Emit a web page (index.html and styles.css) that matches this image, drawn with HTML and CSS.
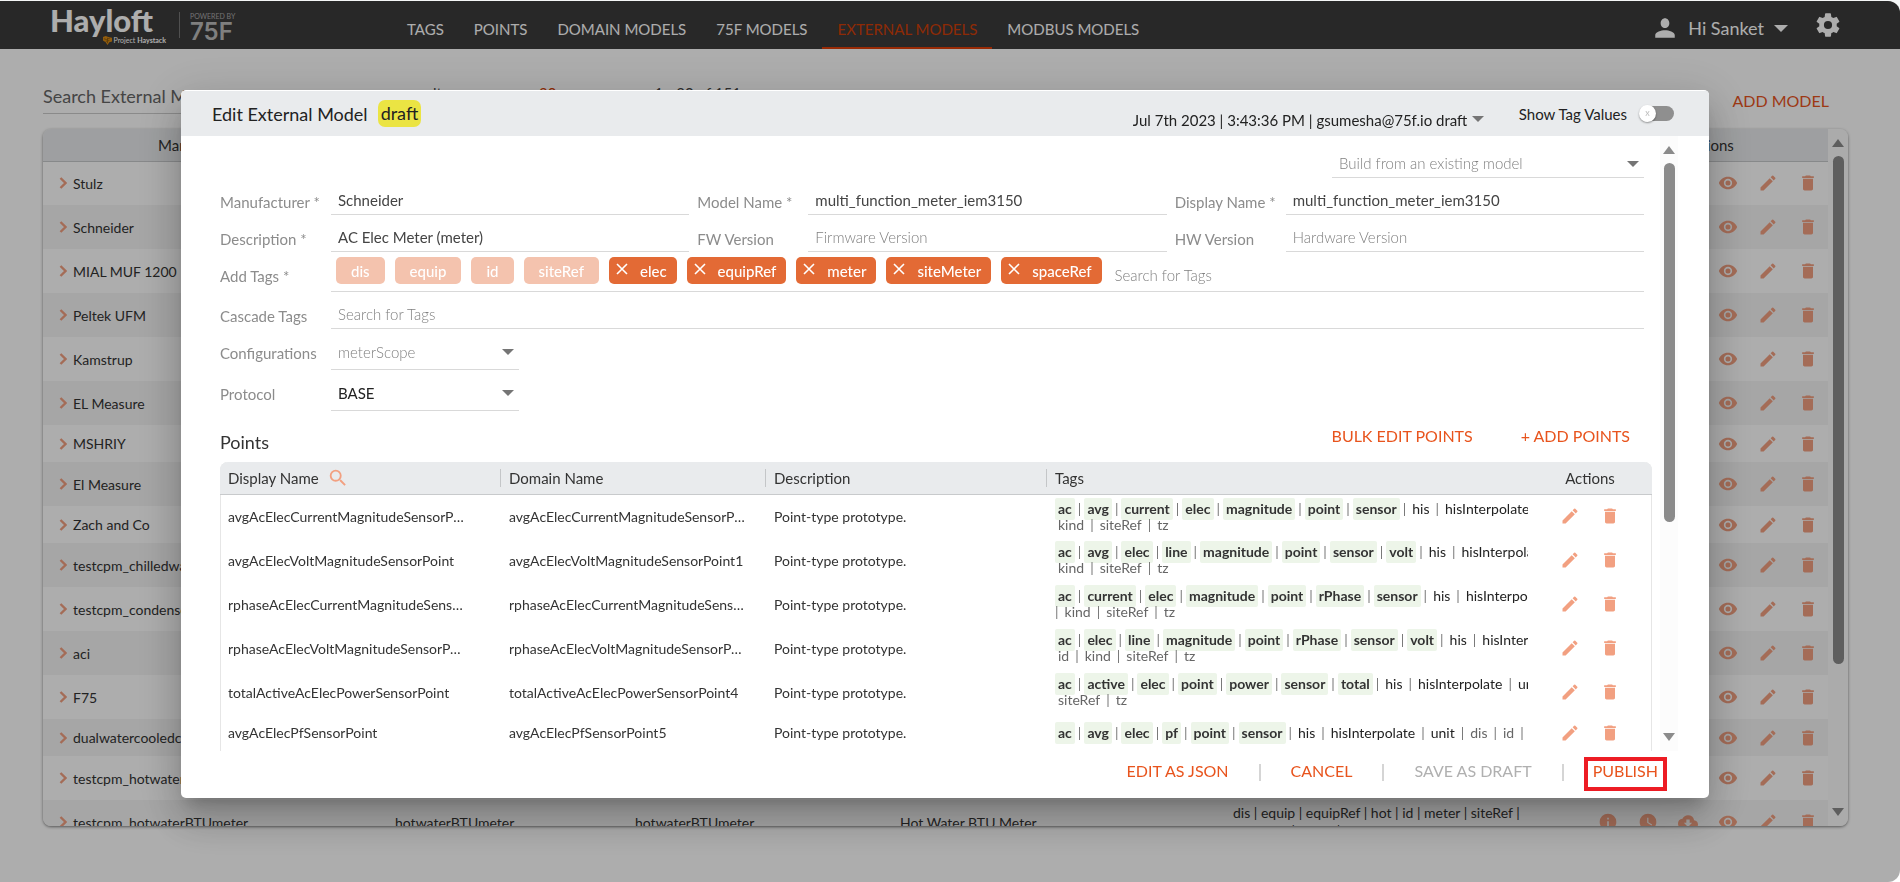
FILE: index.html
```html
<!DOCTYPE html>
<html lang="en">
<head>
    <meta charset="UTF-8">
    <meta name="viewport" content="width=device-width, initial-scale=1.0">
    <title>Hayloft - External Models</title>
    <link rel="stylesheet" href="styles.css">
</head>
<body>
    <svg class="sprite" aria-hidden="true">
        <symbol id="icon-edit" viewBox="0 0 24 24"><path d="M3 17.25V21h3.75L17.81 9.94l-3.75-3.75L3 17.25zM20.71 7.04a1 1 0 0 0 0-1.41l-2.34-2.34a1 1 0 0 0-1.41 0l-1.83 1.83 3.75 3.75 1.83-1.83z"/></symbol>
        <symbol id="icon-delete" viewBox="0 0 24 24"><path d="M6 19c0 1.1.9 2 2 2h8c1.1 0 2-.9 2-2V7H6v12zM19 4h-3.500l-1-1h-5l-1 1H5v2h14V4z"/></symbol>
        <symbol id="icon-view" viewBox="0 0 24 24"><path d="M12 4.500C7 4.500 2.730 7.610 1 12c1.730 4.390 6 7.500 11 7.500s9.270-3.110 11-7.500c-1.730-4.390-6-7.500-11-7.500zM12 17c-2.760 0-5-2.240-5-5s2.240-5 5-5 5 2.240 5 5-2.240 5-5 5zm0-8a3 3 0 1 0 0 6 3 3 0 0 0 0-6z"/></symbol>
        <symbol id="icon-info" viewBox="0 0 24 24"><path d="M12 2a10 10 0 1 0 0 20 10 10 0 0 0 0-20zm1 15h-2v-6h2v6zm0-8h-2V7h2v2z"/></symbol>
        <symbol id="icon-history" viewBox="0 0 24 24"><path d="M12 2a10 10 0 1 0 0 20 10 10 0 0 0 0-20zm4.200 14.200L11 13V7h1.500v5.200l4.500 2.700-.8 1.300z"/></symbol>
        <symbol id="icon-download" viewBox="0 0 24 24"><path d="M19.350 10.040A7.490 7.490 0 0 0 12 4C9.110 4 6.600 5.640 5.350 8.040A5.994 5.994 0 0 0 0 14c0 3.310 2.690 6 6 6h13c2.760 0 5-2.240 5-5 0-2.640-2.050-4.780-4.650-4.960zM17 13l-5 5-5-5h3V9h4v4h3z"/></symbol>
        <symbol id="icon-chevron" viewBox="0 0 8 12"><path d="M1.500 1l5 5-5 5" fill="none" stroke="currentColor" stroke-width="2.400"/></symbol>
        <symbol id="icon-close" viewBox="0 0 12 12"><path d="M1 1l10 10M11 1L1 11" fill="none" stroke="currentColor" stroke-width="1.600"/></symbol>
        <symbol id="icon-search" viewBox="0 0 24 24"><path d="M15.500 14h-.79l-.28-.27A6.470 6.470 0 0 0 16 9.500 6.500 6.500 0 1 0 9.500 16c1.610 0 3.090-.59 4.230-1.570l.27.28v.79l5 4.990L20.490 19l-4.990-5zm-6 0a4.500 4.500 0 1 1 0-9 4.500 4.500 0 0 1 0 9z"/></symbol>
        <symbol id="icon-person" viewBox="0 0 24 24"><path d="M12 12c2.210 0 4-2 4-4.500S14.210 3 12 3 8 5 8 7.500s1.790 4.500 4 4.500zm0 2c-3.500 0-9 1.500-9 4.500V21h18v-2.500c0-3-5.500-4.500-9-4.500z"/></symbol>
        <symbol id="icon-settings" viewBox="0 0 24 24"><path d="M19.430 12.980c.04-.32.07-.64.07-.98s-.03-.66-.07-.98l2.110-1.650a.5.5 0 0 0 .12-.64l-2-3.460a.5.5 0 0 0-.61-.22l-2.490 1a7.300 7.300 0 0 0-1.690-.98l-.38-2.650A.49.49 0 0 0 14 2h-4a.49.49 0 0 0-.49.42l-.38 2.650c-.61.25-1.170.59-1.690.98l-2.490-1a.5.5 0 0 0-.61.22l-2 3.460a.5.5 0 0 0 .12.64l2.110 1.650c-.04.32-.07.65-.07.98s.03.66.07.98l-2.110 1.650a.5.5 0 0 0-.12.64l2 3.460a.5.5 0 0 0 .61.22l2.490-1c.52.4 1.080.73 1.690.98l.38 2.650c.03.24.24.42.49.42h4c.25 0 .46-.18.49-.42l.38-2.650c.61-.25 1.170-.59 1.690-.98l2.490 1a.5.5 0 0 0 .61-.22l2-3.460a.5.5 0 0 0-.12-.64l-2.110-1.650zM12 15.500a3.500 3.500 0 1 1 0-7 3.500 3.500 0 0 1 0 7z"/></symbol>
    </svg>

    <div class="page">
        <header class="topbar">
            <a class="logo" href="#">
                <span class="logo-name">Hayloft</span>
                <span class="logo-sub">
                    <svg viewBox="0 0 10 10"><path d="M0 1l3-1 3 1 4 1v4l-3 1-2 3-2-3-3-2z" fill="#d98a14"/><path d="M1 3l3 1 4-2M3 6l4-1M5 2v6" fill="none" stroke="#8a5a10"/></svg>
                    Project <b>Haystack</b>
                </span>
            </a>
            <div class="powered">
                <span class="powered-by">POWERED BY</span>
                <span class="powered-name">75F</span>
            </div>
            <nav class="nav">
                <a href="#">TAGS</a>
                <a href="#">POINTS</a>
                <a href="#">DOMAIN MODELS</a>
                <a href="#">75F MODELS</a>
                <a href="#" class="active">EXTERNAL MODELS</a>
                <a href="#">MODBUS MODELS</a>
            </nav>
            <button class="user-button">
                <svg class="icon-user"><use href="#icon-person"/></svg>
                Hi Sanket
                <span class="arrow-down"></span>
            </button>
            <button class="settings-button" aria-label="Settings">
                <svg><use href="#icon-settings"/></svg>
            </button>
        </header>

        <main class="content">
            <div class="toolbar">
                <input class="search-input" type="text" placeholder="Search External Model" aria-label="Search External Model">
                <div class="pager">
                    <span>results per page</span>
                    <span class="pager-size">20</span>
                    <span>1 - 20 of 151</span>
                </div>
                <button class="link-button">ADD MODEL</button>
            </div>
            <div class="models-card">
                <div class="models-scroll">
                    <table class="models-table">
                        <thead>
                            <tr>
                                <th class="col-manufacturer">Manufacturer</th>
                                <th class="col-model">Model Name</th>
                                <th class="col-display">Display Name</th>
                                <th>Description</th>
                                <th class="col-tags">Tags</th>
                                <th class="col-actions">Actions</th>
                            </tr>
                        </thead>
                        <tbody id="modelRows"></tbody>
                    </table>
                </div>
                <div class="scrollbar">
                    <span class="scroll-up"></span>
                    <div class="scroll-track"><div class="scroll-thumb" style="height: 79%"></div></div>
                    <span class="scroll-down"></span>
                </div>
            </div>
        </main>
    </div>

    <div class="backdrop"></div>

    <div class="modal" role="dialog" aria-labelledby="modalTitle">
        <div class="modal-header">
            <h1 id="modalTitle">Edit External Model</h1>
            <span class="badge">draft</span>
            <div class="select-box version-box">
                <select aria-label="Version">
                    <option>Jul 7th 2023 | 3:43:36 PM | gsumesha@75f.io draft</option>
                </select>
            </div>
            <label class="toggle-label" for="showTagValues">Show Tag Values</label>
            <input class="toggle" type="checkbox" id="showTagValues">
        </div>

        <div class="modal-body">
            <div class="modal-scroll">
                <div class="form">
                    <div class="select-box build-box">
                        <select class="muted" aria-label="Build from an existing model">
                            <option>Build from an existing model</option>
                        </select>
                    </div>

                    <div class="form-grid">
                        <div class="field">
                            <label for="manufacturer">Manufacturer *</label>
                            <input type="text" id="manufacturer" value="Schneider">
                        </div>
                        <div class="field">
                            <label for="modelName">Model Name *</label>
                            <input type="text" id="modelName" value="multi_function_meter_iem3150">
                        </div>
                        <div class="field">
                            <label for="displayName">Display Name *</label>
                            <input type="text" id="displayName" value="multi_function_meter_iem3150">
                        </div>
                        <div class="field">
                            <label for="description">Description *</label>
                            <input type="text" id="description" value="AC Elec Meter (meter)">
                        </div>
                        <div class="field">
                            <label for="fwVersion">FW Version</label>
                            <input type="text" id="fwVersion" placeholder="Firmware Version">
                        </div>
                        <div class="field">
                            <label for="hwVersion">HW Version</label>
                            <input type="text" id="hwVersion" placeholder="Hardware Version">
                        </div>
                    </div>

                    <div class="field field-tags">
                        <label for="addTags">Add Tags *</label>
                        <div class="chips">
                            <span class="chip chip-fixed">dis</span>
                            <span class="chip chip-fixed">equip</span>
                            <span class="chip chip-fixed">id</span>
                            <span class="chip chip-fixed">siteRef</span>
                            <span class="chip"><button aria-label="Remove elec"><svg><use href="#icon-close"/></svg></button>elec</span>
                            <span class="chip"><button aria-label="Remove equipRef"><svg><use href="#icon-close"/></svg></button>equipRef</span>
                            <span class="chip"><button aria-label="Remove meter"><svg><use href="#icon-close"/></svg></button>meter</span>
                            <span class="chip"><button aria-label="Remove siteMeter"><svg><use href="#icon-close"/></svg></button>siteMeter</span>
                            <span class="chip"><button aria-label="Remove spaceRef"><svg><use href="#icon-close"/></svg></button>spaceRef</span>
                            <input type="text" id="addTags" placeholder="Search for Tags">
                        </div>
                    </div>
                    <div class="field">
                        <label for="cascadeTags">Cascade Tags</label>
                        <input type="text" id="cascadeTags" placeholder="Search for Tags">
                    </div>
                    <div class="field field-select">
                        <label for="configurations">Configurations</label>
                        <div class="select-box">
                            <select class="muted" id="configurations"><option>meterScope</option></select>
                        </div>
                    </div>
                    <div class="field field-select">
                        <label for="protocol">Protocol</label>
                        <div class="select-box">
                            <select id="protocol"><option>BASE</option></select>
                        </div>
                    </div>
                </div>

                <div class="points-bar">
                    <h2>Points</h2>
                    <button class="link-button">BULK EDIT POINTS</button>
                    <button class="link-button">+ ADD POINTS</button>
                </div>

                <div class="points-card">
                    <table class="points-table">
                        <thead>
                            <tr>
                                <th class="col-name"><span class="th-name">Display Name <svg><use href="#icon-search"/></svg></span></th>
                                <th class="col-domain">Domain Name</th>
                                <th class="col-description">Description</th>
                                <th>Tags</th>
                                <th class="col-edit">Actions</th>
                            </tr>
                        </thead>
                        <tbody id="pointRows"></tbody>
                    </table>
                </div>
            </div>
            <div class="scrollbar modal-scrollbar">
                <span class="scroll-up"></span>
                <div class="scroll-track"><div class="scroll-thumb" style="height: 64%"></div></div>
                <span class="scroll-down"></span>
            </div>
        </div>

        <div class="modal-footer">
            <button class="link-button">EDIT AS JSON</button>
            <button class="link-button">CANCEL</button>
            <button class="link-button" disabled>SAVE AS DRAFT</button>
            <button class="link-button publish">PUBLISH</button>
        </div>
    </div>

    <script>
        const models = [
            { name: 'Stulz' },
            { name: 'Schneider' },
            { name: 'MIAL MUF 1200' },
            { name: 'Peltek UFM' },
            { name: 'Kamstrup' },
            { name: 'EL Measure' },
            { name: 'MSHRIY', short: true },
            { name: 'El Measure' },
            { name: 'Zach and Co', short: true },
            { name: 'testcpm_chilledwater' },
            { name: 'testcpm_condenser' },
            { name: 'aci' },
            { name: 'F75' },
            { name: 'dualwatercooledchiller', short: true },
            { name: 'testcpm_hotwater' },
            {
                name: 'testcpm_hotwaterBTUmeter',
                model: 'hotwaterBTUmeter',
                display: 'hotwaterBTUmeter',
                description: 'Hot Water BTU Meter',
                tags: 'dis | equip | equipRef | hot | id | meter | siteRef | spaceRef | water | btu'
            }
        ];

        // main: highlighted tags, more: normal tags, extra: grey tags, rest: second line
        const points = [
            { name: 'avgAcElecCurrentMagnitudeSensorPoint', domain: 'avgAcElecCurrentMagnitudeSensorPoint0', main: 'ac avg current elec magnitude point sensor', more: 'his hisInterpolate', rest: 'kind siteRef tz' },
            { name: 'avgAcElecVoltMagnitudeSensorPoint', domain: 'avgAcElecVoltMagnitudeSensorPoint1', main: 'ac avg elec line magnitude point sensor volt', more: 'his hisInterpolate', rest: 'kind siteRef tz' },
            { name: 'rphaseAcElecCurrentMagnitudeSensorPoint', domain: 'rphaseAcElecCurrentMagnitudeSensorPoint2', main: 'ac current elec magnitude point rPhase sensor', more: 'his hisInterpolate', rest: 'kind siteRef tz', leadingBar: true },
            { name: 'rphaseAcElecVoltMagnitudeSensorPoint', domain: 'rphaseAcElecVoltMagnitudeSensorPoint3', main: 'ac elec line magnitude point rPhase sensor volt', more: 'his hisInterpolate', rest: 'id kind siteRef tz' },
            { name: 'totalActiveAcElecPowerSensorPoint', domain: 'totalActiveAcElecPowerSensorPoint4', main: 'ac active elec point power sensor total', more: 'his hisInterpolate unit', rest: 'siteRef tz' },
            { name: 'avgAcElecPfSensorPoint', domain: 'avgAcElecPfSensorPoint5', main: 'ac avg elec pf point sensor', more: 'his hisInterpolate unit', extra: 'dis id kind' }
        ];

        const bar = '<i>|</i>';

        function icon(name, label) {
            return `<button class="icon-button" aria-label="${label}"><svg><use href="#icon-${name}"/></svg></button>`;
        }

        function tagList(tags, className) {
            return tags ? tags.split(' ').map(tag => `<span class="${className}">${tag}</span>`) : [];
        }

        document.getElementById('modelRows').innerHTML = models.map(model => `
            <tr class="${model.short ? 'short' : ''}">
                <td><span class="model-name"><svg><use href="#icon-chevron"/></svg>${model.name}</span></td>
                <td>${model.model || ''}</td>
                <td>${model.display || ''}</td>
                <td>${model.description || ''}</td>
                <td><div class="model-tags">${model.tags || ''}</div></td>
                <td><div class="actions">
                    ${icon('info', 'Info')}${icon('history', 'History')}${icon('download', 'Download')}
                    ${icon('view', 'View')}${icon('edit', 'Edit')}${icon('delete', 'Delete')}
                </div></td>
            </tr>`).join('');

        document.getElementById('pointRows').innerHTML = points.map(point => {
            const tags = tagList(point.main, 'tag tag-main')
                .concat(tagList(point.more, 'tag'), tagList(point.extra, 'tag tag-extra'));
            const rest = (point.leadingBar ? bar : '') + tagList(point.rest, 'tag tag-extra').join(bar);
            return `
            <tr class="${point.rest ? '' : 'short'}">
                <td><div class="ellipsis">${point.name}</div></td>
                <td><div class="ellipsis">${point.domain}</div></td>
                <td>Point-type prototype.</td>
                <td>
                    <div class="tag-line">${tags.join(bar)}</div>
                    ${rest ? `<div class="tag-line tag-rest">${rest}</div>` : ''}
                </td>
                <td><div class="actions">${icon('edit', 'Edit')}${icon('delete', 'Delete')}</div></td>
            </tr>`;
        }).join('');
    </script>
</body>
</html>
```
FILE: styles.css
```css
* {
    margin: 0;
    padding: 0;
    box-sizing: border-box;
}

body {
    background: #f4f6f6;
    color: #333;
    font-family: Lato, "Open Sans", sans-serif;
    font-size: 15px;
    height: 100vh;
    overflow: hidden;
}

button, input, select {
    font: inherit;
    color: inherit;
    background: none;
    border: none;
    outline: none;
    min-width: 0;
}

button {
    cursor: pointer;
}

.sprite {
    position: absolute;
    width: 0;
    height: 0;
}

svg {
    display: block;
    fill: currentColor;
}

.page {
    display: flex;
    flex-direction: column;
    height: 100vh;
    padding-top: 1px;
}

/* top bar */
.topbar {
    display: flex;
    align-items: center;
    height: 48px;
    padding: 0 58px 0 50px;
    background: #3c3c3c;
    color: #fff;
    border-radius: 0 12px 0 0;
}

.logo {
    display: flex;
    flex-direction: column;
    width: 129px;
    height: 40px;
    color: #fff;
    text-decoration: none;
}

.logo-name {
    font-size: 31px;
    font-weight: 900;
    line-height: 31px;
}

.logo-sub {
    display: flex;
    align-items: center;
    justify-content: flex-end;
    gap: 2px;
    padding-right: 13px;
    font-size: 7px;
    line-height: 9px;
}

.logo-sub svg {
    width: 9px;
    height: 9px;
}

.powered {
    display: flex;
    flex-direction: column;
    gap: 1px;
    width: 213px;
    padding-left: 10px;
    border-left: 1px solid #777;
    color: #aaa;
}

.powered-by {
    font-size: 7px;
    line-height: 9px;
}

.powered-name {
    font-family: Inter, sans-serif;
    font-size: 24px;
    font-weight: 600;
    line-height: 28px;
    height: 20px;
    margin-top: -4px;
    color: #bbb;
}

.nav {
    display: flex;
    flex: 1;
    height: 48px;
}

.nav a {
    padding: 18px 15px 0;
    line-height: 20px;
    color: #fff;
    text-decoration: none;
}

.nav .active {
    color: #d23f08;
    border-bottom: 2px solid #e03f08;
}

.user-button {
    display: flex;
    align-items: center;
    gap: 10px;
    margin-right: 26px;
    padding-top: 6px;
    font-size: 18px;
}

.icon-user {
    width: 26px;
    height: 26px;
}

.arrow-down {
    border: 7px solid transparent;
    border-top-color: currentColor;
    border-bottom: 0;
}

.settings-button {
    height: 28px;
}

.settings-button svg {
    width: 28px;
    height: 28px;
}

/* models page */
.content {
    display: flex;
    flex-direction: column;
    flex: 1;
    min-height: 0;
    padding: 31px 52px 56px 43px;
    background: #fff;
}

.toolbar {
    display: flex;
    height: 49px;
    padding-right: 19px;
}

.search-input {
    width: 340px;
    height: 34px;
    padding-bottom: 2px;
    border-bottom: 1px solid #ccc;
    font-size: 18px;
}

.search-input::placeholder {
    color: #666;
}

.pager {
    display: flex;
    flex: 1;
    gap: 30px;
    padding: 3px 0 0 22px;
    color: #444;
    font-size: 15px;
    line-height: 20px;
}

.pager-size {
    margin-right: 68px;
    color: #d23f08;
}

.link-button {
    color: #e8541d;
    font-size: 16px;
    line-height: 20px;
}

.link-button:disabled {
    color: #b0b0b0;
    cursor: default;
}

.toolbar .link-button {
    height: 42px;
}

.models-card {
    display: flex;
    flex: 1;
    min-height: 0;
    border-radius: 8px;
    box-shadow: 0 1px 3px rgba(0,0,0,0.5);
    overflow: hidden;
}

.models-scroll {
    flex: 1;
    overflow: hidden;
}

table {
    width: 100%;
    border-collapse: collapse;
    table-layout: fixed;
}

th {
    height: 32px;
    background: #e9ebed;
    border-bottom: 1px solid #c8cacc;
    font-size: 15px;
    font-weight: 400;
}

td {
    height: 44px;
    padding: 0 8px;
    font-size: 14px;
}

.short td {
    height: 37px;
}

.models-table tr:nth-child(even) td {
    background: #f5f5f5;
}

.col-manufacturer {
    width: 344px;
    padding-right: 24px;
}

.col-model {
    width: 240px;
}

.col-display {
    width: 265px;
}

.col-tags {
    width: 365px;
}

.col-actions {
    width: 238px;
}

.model-name {
    display: flex;
    align-items: center;
    gap: 6px;
    padding-left: 8px;
}

.model-name svg {
    width: 8px;
    height: 12px;
    color: #f2a081;
}

.model-tags {
    max-height: 36px;
    padding-right: 60px;
    line-height: 18px;
    overflow: hidden;
}

.actions {
    display: flex;
    gap: 20px;
}

.icon-button {
    width: 20px;
    height: 20px;
    color: #f2a081;
}

.icon-button svg {
    width: 20px;
    height: 20px;
}

/* scrollbars */
.scrollbar {
    display: flex;
    flex-direction: column;
    align-items: center;
    gap: 9px;
    width: 20px;
    padding: 10px 0;
    background: #fcfcfc;
}

.scroll-up, .scroll-down {
    border: 6px solid transparent;
}

.scroll-up {
    border-top: 0;
    border-bottom: 8px solid #8b8b8b;
}

.scroll-down {
    border-bottom: 0;
    border-top: 8px solid #8b8b8b;
}

.scroll-track {
    flex: 1;
}

.scroll-thumb {
    width: 11px;
    background: #8b8b8b;
    border-radius: 6px;
}

/* modal */
.backdrop {
    position: fixed;
    inset: 1px 0 0;
    background: rgba(0,0,0,0.32);
    border-radius: 0 12px 12px 0;
}

.modal {
    position: fixed;
    inset: 90px 191px 84px 181px;
    display: flex;
    flex-direction: column;
    padding-top: 1px;
    background: #fff;
    border-radius: 5px;
    box-shadow: 0 11px 15px -7px rgba(0,0,0,0.2), 0 24px 38px 3px rgba(0,0,0,0.14), 0 9px 46px 8px rgba(0,0,0,0.12);
    overflow: hidden;
}

.modal-header {
    display: flex;
    align-items: center;
    height: 45px;
    padding: 0 35px 0 31px;
    background: #e9ebed;
    color: #222;
}

.modal-header h1, .points-bar h2 {
    font-size: 18px;
    font-weight: 400;
    line-height: 24px;
}

.badge {
    margin: 0 auto 0 10px;
    padding: 0 3px;
    background: #ebe443;
    border-radius: 7px;
    font-size: 18px;
    line-height: 27px;
}

.select-box {
    position: relative;
    display: flex;
}

.select-box::after {
    content: "";
    position: absolute;
    right: 5px;
    top: 50%;
    margin-top: -4px;
    border: 6px solid transparent;
    border-top-color: #757575;
    border-bottom: 0;
    pointer-events: none;
}

.select-box select {
    flex: 1;
    height: 100%;
    padding: 0 21px 0 7px;
    appearance: none;
}

.version-box {
    height: 20px;
    margin: 12px 30px 0 0;
}

.toggle-label {
    margin-right: 12px;
}

.toggle {
    position: relative;
    width: 28px;
    height: 15px;
    margin-left: 7px;
    appearance: none;
    background: #8f8f8f;
    border-radius: 8px;
}

.toggle::before {
    content: "x";
    position: absolute;
    left: -7px;
    top: -1px;
    width: 17px;
    height: 17px;
    background: #fff;
    border-radius: 50%;
    box-shadow: 0 1px 2px rgba(0,0,0,0.4);
    color: #bbb;
    font-size: 9px;
    line-height: 15px;
    text-align: center;
}

.modal-body {
    display: flex;
    flex: 1;
    min-height: 0;
    padding: 0 31px 0 39px;
}

.modal-scroll {
    flex: 1;
    overflow: hidden;
}

.modal-scrollbar {
    margin-left: 8px;
    width: 18px;
}

.form {
    margin-right: 8px;
    color: #444;
}

.build-box {
    width: 312px;
    height: 42px;
    margin-left: auto;
    padding-top: 13px;
    border-bottom: 1px solid #d9d9d9;
}

.build-box::after {
    margin-top: 4px;
}

.form-grid {
    display: grid;
    grid-template-columns: repeat(3, 1fr);
    column-gap: 8px;
}

.field {
    display: flex;
    align-items: flex-end;
    height: 37px;
}

.field label {
    width: 111px;
    flex: none;
    line-height: 26px;
    color: #8c8c8c;
}

.field > input, .field > .select-box {
    flex: 1;
    height: 27px;
    padding: 0 0 2px 7px;
    border-bottom: 1px solid #d9d9d9;
}

.field input::placeholder, .muted {
    color: #808080;
    font-weight: 300;
    opacity: 1;
}

.chips {
    display: flex;
    flex: 1;
    gap: 10px;
    height: 35px;
    padding-left: 5px;
    border-bottom: 1px solid #d9d9d9;
}

.chip {
    display: flex;
    height: 27px;
    padding: 0 10px 0 7px;
    background: #e36a35;
    border-radius: 5px;
    color: #fff;
    font-weight: 500;
    line-height: 29px;
}

.chip button {
    height: 24px;
    margin-right: 12px;
}

.chip svg {
    width: 12px;
    height: 12px;
}

.chip-fixed {
    padding: 0 15px;
    background: #f4c3ae;
}

.chips input {
    flex: 1;
    height: 36px;
    padding-left: 3px;
}

.field-tags {
    height: 40px;
}

.field-tags label {
    line-height: 31px;
}

.field-select {
    height: 41px;
}

.field-select label {
    line-height: 33px;
}

.field > .select-box {
    flex: none;
    width: 188px;
    height: 33px;
    padding-left: 0;
}

#protocol {
    color: #222;
}

.points-bar {
    display: flex;
    gap: 48px;
    height: 51px;
    padding: 15px 22px 0 0;
}

.points-bar h2 {
    flex: 1;
    padding-top: 4px;
    color: #333;
}

.points-bar .link-button {
    height: 20px;
}

.points-card {
    border-radius: 8px 8px 0 0;
    box-shadow: inset 1px 0 #e6e6e6, inset -1px 0 #e6e6e6;
    overflow: hidden;
}

.points-table th {
    padding: 0 8px;
    background: linear-gradient(#c4c6c8, #c4c6c8) no-repeat right center / 1px 18px #e9ebed;
    text-align: left;
}

.points-table th:nth-child(n + 4) {
    background: #e9ebed;
}

.col-name {
    width: 281px;
}

.col-domain {
    width: 265px;
}

.col-description {
    width: 281px;
}

.points-table .col-edit {
    width: 124px;
    text-align: center;
}

.th-name {
    display: flex;
    align-items: center;
    gap: 8px;
}

.th-name svg {
    width: 22px;
    height: 22px;
    color: #f2a081;
}

.ellipsis {
    overflow: hidden;
    text-overflow: ellipsis;
    white-space: nowrap;
}

.points-table td:nth-child(1) {
    padding-right: 33px;
}

.points-table td:nth-child(2) {
    padding-right: 17px;
}

.points-table td:nth-child(4) {
    padding-right: 0;
    vertical-align: top;
    padding-top: 3px;
}

.points-table .short td:nth-child(4) {
    padding-top: 8px;
}

.points-table td:last-child {
    padding-left: 32px;
}

.tag-line {
    display: flex;
    gap: 3px;
    overflow: hidden;
    line-height: 22px;
    color: #222;
}

.tag-line i {
    font-style: normal;
    color: #777;
}

.tag {
    padding: 0 3px;
}

.tag-main {
    background: #edf5e9;
    border-radius: 2px;
    color: #333;
    font-weight: 700;
}

.tag-extra {
    color: #666;
}

.tag-rest {
    line-height: 16px;
    margin-top: -3px;
}

.modal-footer {
    display: flex;
    align-items: center;
    justify-content: flex-end;
    height: 47px;
    padding: 0 42px 7px 0;
}

.modal-footer .link-button + .link-button {
    margin-left: 30px;
}

.modal-footer .link-button:not(.publish)::after {
    content: "";
    display: inline-block;
    width: 2px;
    height: 17px;
    margin-left: 30px;
    background: #d5d5d5;
    vertical-align: middle;
}

.modal-footer .publish {
    height: 34px;
    margin-top: 6px;
    padding: 0 5px 6px;
    border: 4px solid #ed1c24;
}

.modal-footer .link-button + .publish {
    margin-left: 20px;
}
```
